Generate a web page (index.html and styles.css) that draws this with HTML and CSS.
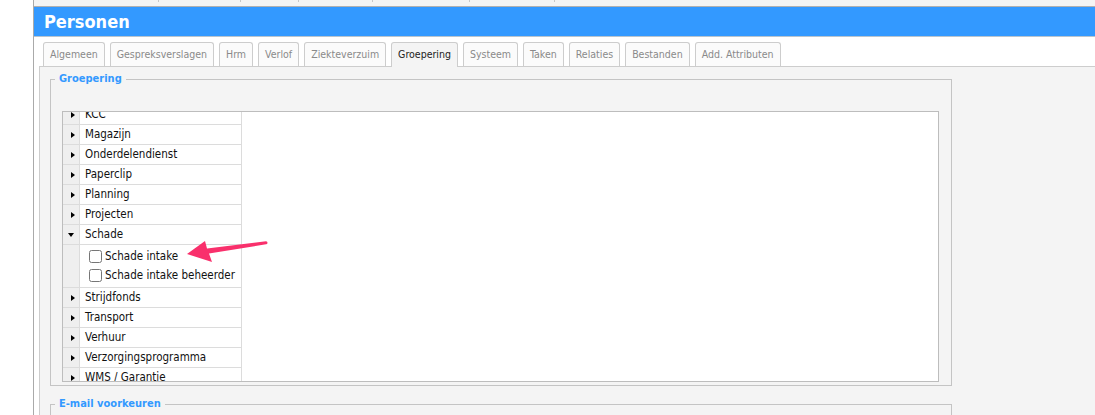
FILE: index.html
```html
<!DOCTYPE html>
<html lang="nl">
<head>
    <meta charset="UTF-8">
    <title>Personen</title>
    <link rel="stylesheet" href="styles.css">
</head>
<body>
    <div class="page">
        <div class="sidebar"></div>
        <div class="main">
            <div class="topstrip">
                <span class="c1"></span><span class="c2"></span><span class="c3"></span><span class="c4"></span><span class="c5"></span><span class="c6"></span>
            </div>
            <div class="titlebar">
                <h1>Personen</h1>
            </div>
            <div class="tabs">
                <div class="tab">Algemeen</div>
                <div class="tab">Gespreksverslagen</div>
                <div class="tab">Hrm</div>
                <div class="tab">Verlof</div>
                <div class="tab">Ziekteverzuim</div>
                <div class="tab active">Groepering</div>
                <div class="tab">Systeem</div>
                <div class="tab">Taken</div>
                <div class="tab">Relaties</div>
                <div class="tab">Bestanden</div>
                <div class="tab">Add. Attributen</div>
            </div>
            <div class="panel">
                <fieldset class="group">
                    <legend>Groepering</legend>
                    <div class="tree">
                        <ul class="tree-list">
                            <li class="row"><span class="toggle"><i class="closed"></i></span><span class="name">KCC</span></li>
                            <li class="row"><span class="toggle"><i class="closed"></i></span><span class="name">Magazijn</span></li>
                            <li class="row"><span class="toggle"><i class="closed"></i></span><span class="name">Onderdelendienst</span></li>
                            <li class="row"><span class="toggle"><i class="closed"></i></span><span class="name">Paperclip</span></li>
                            <li class="row"><span class="toggle"><i class="closed"></i></span><span class="name">Planning</span></li>
                            <li class="row"><span class="toggle"><i class="closed"></i></span><span class="name">Projecten</span></li>
                            <li class="row"><span class="toggle"><i class="open"></i></span><span class="name">Schade</span></li>
                            <li class="row children">
                                <span class="toggle"></span>
                                <span class="name">
                                    <label><input type="checkbox">Schade intake</label>
                                    <label><input type="checkbox">Schade intake beheerder</label>
                                </span>
                            </li>
                            <li class="row"><span class="toggle"><i class="closed"></i></span><span class="name">Strijdfonds</span></li>
                            <li class="row"><span class="toggle"><i class="closed"></i></span><span class="name">Transport</span></li>
                            <li class="row"><span class="toggle"><i class="closed"></i></span><span class="name">Verhuur</span></li>
                            <li class="row"><span class="toggle"><i class="closed"></i></span><span class="name">Verzorgingsprogramma</span></li>
                            <li class="row"><span class="toggle"><i class="closed"></i></span><span class="name">WMS / Garantie</span></li>
                        </ul>
                        <svg class="arrow" width="95" height="33" viewBox="0 0 95 33">
                            <path d="M7 19 L25 6 L27 13.5 L86 6.3 A1.5 1.5 0 0 1 86 9.3 L29 18.5 L32 27 Z" fill="#f9306c"/>
                        </svg>
                    </div>
                </fieldset>
                <fieldset class="group email">
                    <legend>E-mail voorkeuren</legend>
                </fieldset>
            </div>
        </div>
    </div>
</body>
</html>
```

FILE: styles.css
```css
html, body {
    margin: 0;
    padding: 0;
    background: #fff;
}
body {
    font-family: "DejaVu Sans Condensed", "DejaVu Sans", sans-serif;
    font-stretch: condensed;
    color: #111;
    overflow: hidden;
}
.page {
    display: flex;
    height: 415px;
}
.sidebar {
    width: 33px;
    border-right: 1px solid #aaa;
    flex-shrink: 0;
}
.main {
    flex: 1;
    min-width: 0;
    overflow: hidden;
}
.topstrip {
    display: flex;
    height: 6px;
    background: #f4f4f4;
    border-bottom: 1px solid #b0b0b0;
}
.topstrip span {
    box-sizing: border-box;
    height: 2px;
    border-right: 1px solid #c8c8c8;
}
.c1 { width: 125px; }
.c2 { width: 82px; }
.c3 { width: 58px; }
.c4 { width: 74px; }
.c5 { width: 97px; }
.c6 { width: 85px; }
.titlebar {
    background: #3399ff;
    height: 29px;
    border-bottom: 1px solid #b8c4cf;
    padding-left: 10px;
    display: flex;
    align-items: center;
}
.titlebar h1 {
    margin: 0;
    color: #fff;
    font-size: 18px;
    font-weight: bold;
}
.tabs {
    display: flex;
    align-items: flex-end;
    gap: 5px;
    margin: 5px 0 0 5px;
    padding-left: 4px;
    position: relative;
    z-index: 1;
}
.tab {
    height: 23px;
    line-height: 23px;
    padding: 0 6px;
    font-size: 10.5px;
    color: #8a8a8a;
    background: #fbfbfb;
    border: 1px solid #cdcdcd;
    border-bottom: none;
    border-radius: 3px 3px 0 0;
    white-space: nowrap;
}
.tab.active {
    color: #222;
    background: #f4f4f4;
    height: 24px;
    margin-bottom: -1px;
}
.panel {
    margin-left: 5px;
    background: #f4f4f4;
    border-top: 1px solid #cdcdcd;
    border-left: 1px solid #cdcdcd;
    padding: 5px 0 0 10px;
    height: 400px;
}
.group {
    box-sizing: border-box;
    width: 902px;
    margin: 0;
    padding: 25px 12px 3px 11px;
    border: 1px solid #c4c4c4;
}
.group legend {
    margin-left: -7px;
    padding: 0 4px;
    line-height: 14px;
    font-size: 11px;
    font-weight: bold;
    color: #3399ff;
}
.group.email {
    margin-top: 11px;
    height: 80px;
}
.tree {
    position: relative;
    box-sizing: border-box;
    height: 271px;
    background: #fff;
    border: 1px solid #bdbdbd;
    overflow: hidden;
}
.tree-list {
    list-style: none;
    margin: -7px 0 0 0;
    padding: 0;
    width: 178px;
    border-right: 1px solid #dcdcdc;
    font-size: 11.5px;
}
.row {
    display: flex;
    border-bottom: 1px solid #dcdcdc;
    line-height: 19px;
}
.toggle {
    width: 16px;
    flex-shrink: 0;
    background: #efefef;
    border-right: 1px solid #dcdcdc;
    display: flex;
    align-items: center;
}
.toggle .closed {
    margin-left: 8px;
    border-left: 4px solid #000;
    border-top: 3px solid transparent;
    border-bottom: 3px solid transparent;
}
.toggle .open {
    margin-left: 5px;
    border-top: 4px solid #000;
    border-left: 3px solid transparent;
    border-right: 3px solid transparent;
}
.name {
    padding-left: 5px;
    white-space: nowrap;
}
.children .name {
    display: flex;
    flex-direction: column;
    padding: 2px 0 2px 5px;
}
.children label {
    display: flex;
    align-items: center;
    height: 19px;
}
.children input {
    margin: 0 3px 0 4px;
    width: 13px;
    height: 13px;
}
.arrow {
    position: absolute;
    left: 117px;
    top: 123px;
}
```
